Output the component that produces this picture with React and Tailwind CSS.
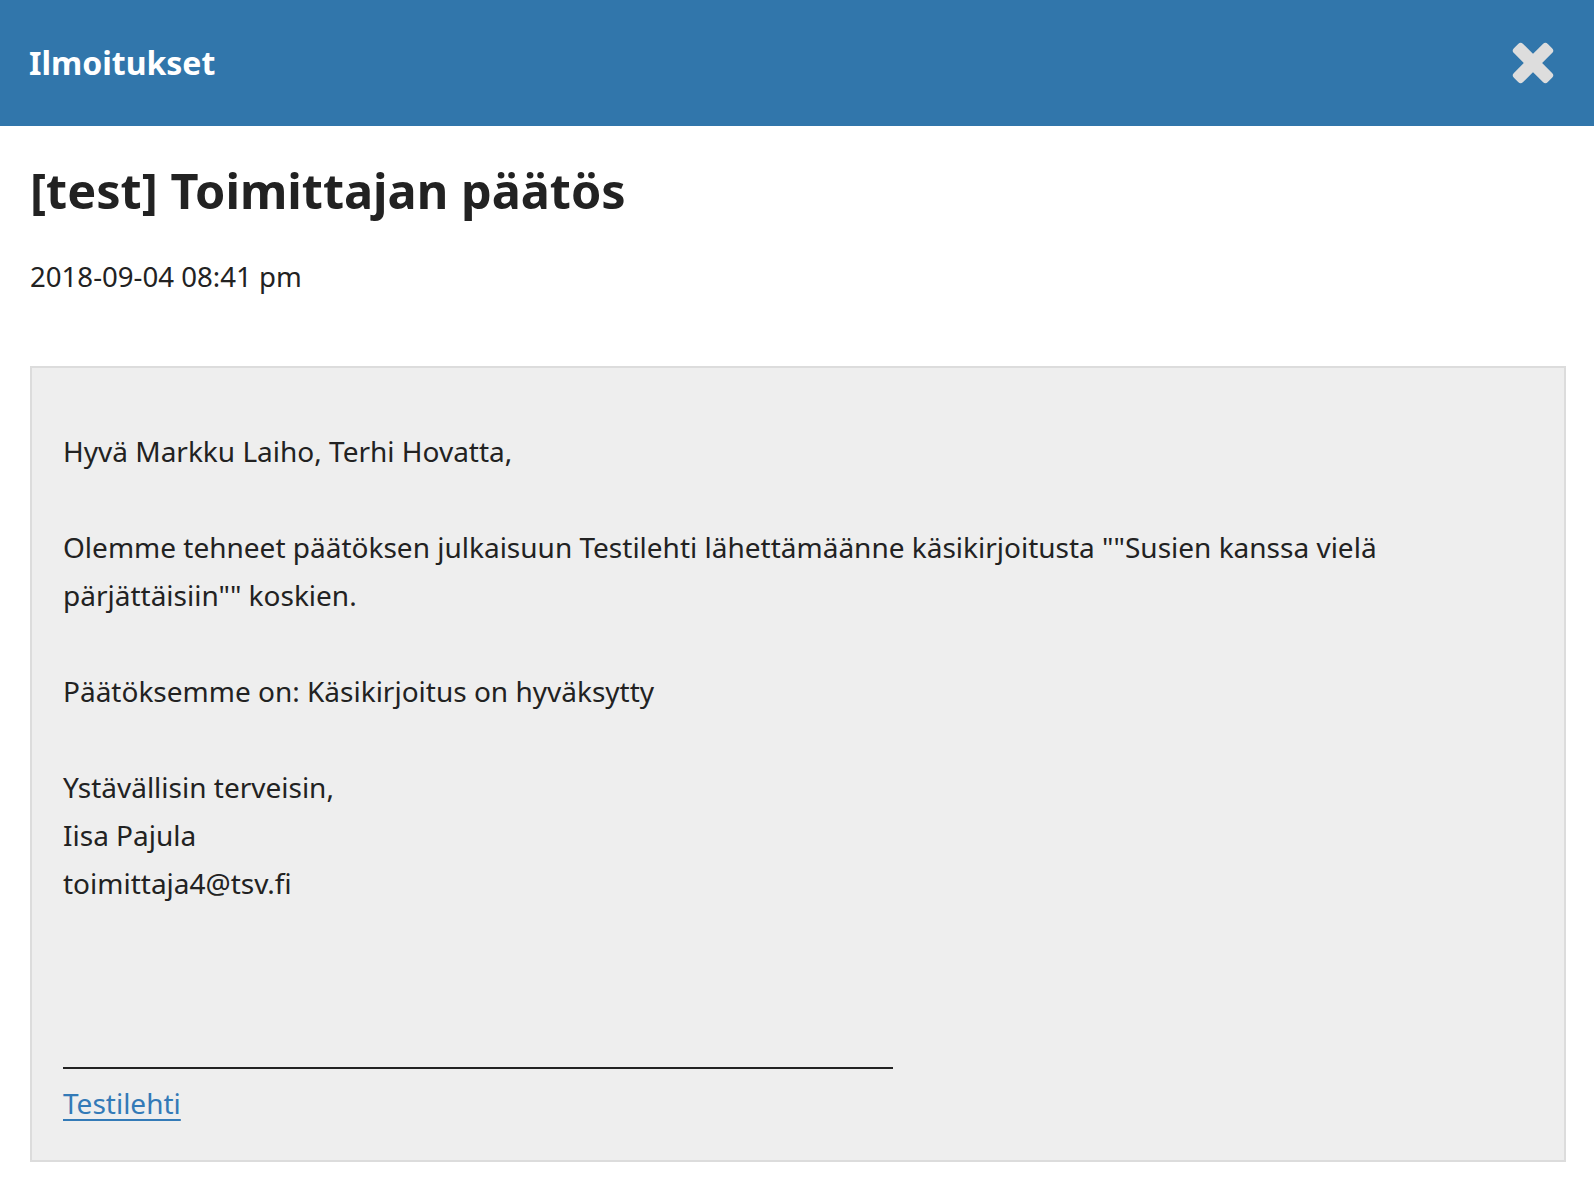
export default function App() {
  return (
    <div className="min-h-screen bg-white font-['Noto_Sans',sans-serif] text-[#222]">
      <header className="flex h-[126px] items-center justify-between bg-[#3176ab] pl-[29px] pr-[40px]">
        <h2 className="text-[32px] font-bold text-white">Ilmoitukset</h2>
        <button aria-label="Sulje" className="flex h-[42px] w-[42px] items-center justify-center">
          <svg viewBox="0 0 42 42" width="42" height="42">
            <rect x="-3" y="14.5" width="48" height="13" rx="3.5" fill="#dddddd" transform="rotate(45 21 21)" />
            <rect x="-3" y="14.5" width="48" height="13" rx="3.5" fill="#dddddd" transform="rotate(-45 21 21)" />
          </svg>
        </button>
      </header>

      <main className="pl-[30px] pr-[28px]">
        <h1 className="mt-[35px] text-[48.6px] font-bold leading-[1.2]">[test] Toimittajan päätös</h1>
        <div className="mt-[34px] text-[27.6px] leading-[47.6px]">2018-09-04 08:41 pm</div>

        <div className="mt-[65px] border-2 border-[#dcdcdc] bg-[#eeeeee] pb-[33px] pl-[31px] pr-[31px] pt-[59px] text-[28px] leading-[48px]">
          <p className="mb-[48px]">Hyvä Markku Laiho, Terhi Hovatta,</p>
          <p className="mb-[48px] max-w-[1340px]">
            Olemme tehneet päätöksen julkaisuun Testilehti lähettämäänne käsikirjoitusta ""Susien kanssa vielä pärjättäisiin"" koskien.
          </p>
          <p className="mb-[48px]">Päätöksemme on: Käsikirjoitus on hyväksytty</p>
          <p>
            Ystävällisin terveisin,
            <br />
            Iisa Pajula
            <br />
            toimittaja4@tsv.fi
          </p>
          <div className="mt-[160px] h-[2px] w-[830px] bg-[#222]" />
          <a href="#" className="mt-[10px] inline-block text-[#337ab7] underline underline-offset-[5px]">
            Testilehti
          </a>
        </div>
      </main>
    </div>
  )
}
